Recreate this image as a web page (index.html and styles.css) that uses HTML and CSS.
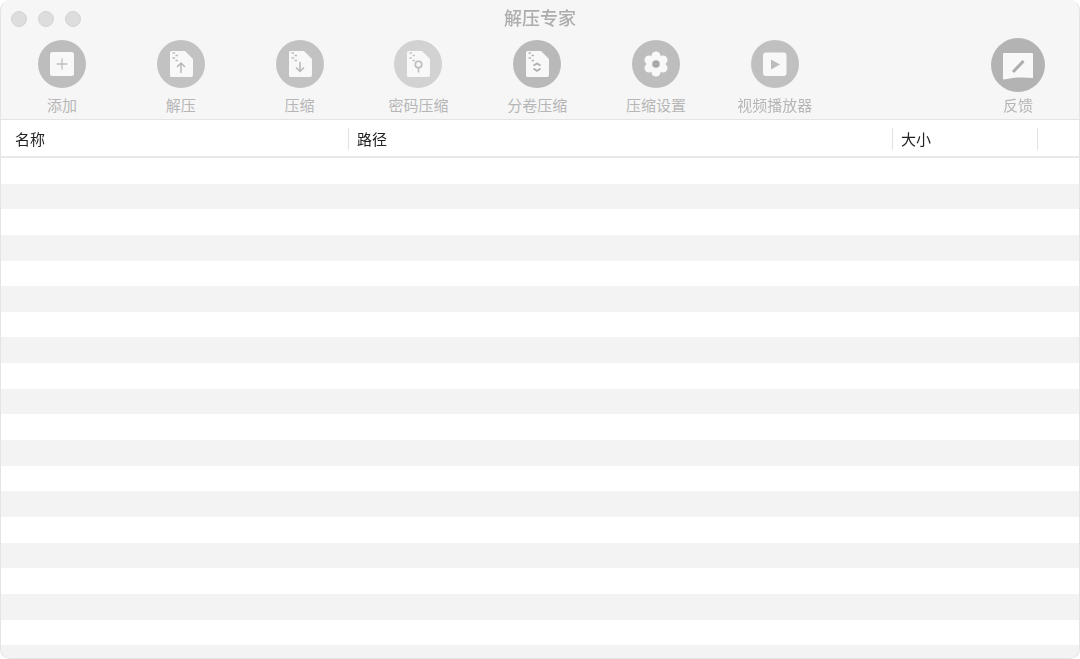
FILE: index.html
```html
<!DOCTYPE html>
<html lang="zh-CN">
<head>
    <meta charset="UTF-8">
    <meta name="viewport" content="width=device-width, initial-scale=1.0">
    <title>解压专家</title>
    <link rel="stylesheet" href="styles.css">
</head>
<body>
    <div class="window">
        <header class="titlebar">
            <div class="lights">
                <span class="light"></span>
                <span class="light"></span>
                <span class="light"></span>
            </div>
            <h1>解压专家</h1>
        </header>

        <nav class="toolbar">
            <div class="tool">
                <div class="tool-icon">
                    <svg class="circle" viewBox="0 0 48 48">
                        <circle cx="24" cy="24" r="24" fill="#bdbdbd"/>
                        <rect x="12" y="12" width="24" height="24" rx="2.5" fill="#f8f8f8"/>
                        <path d="M24 18.500v11M18.500 24h11" stroke="#c0c0c0" stroke-width="1.400" fill="none"/>
                    </svg>
                </div>
                <span>添加</span>
            </div>
            <div class="tool">
                <div class="tool-icon">
                    <svg class="circle" viewBox="0 0 48 48">
                        <circle cx="24" cy="24" r="24" fill="#c2c2c2"/>
                        <path d="M14.500 11H28l8 8v16a2 2 0 0 1-2 2H14.500a1.500 1.500 0 0 1-1.500-1.500v-23a1.500 1.500 0 0 1 1.500-1.500z" fill="#f8f8f8"/>
                        <path d="M15.500 13h2.500M18.500 15.500h2.500M15.500 18h2.500M18.500 20.500h2.500" stroke="#bcbcbc" stroke-width="1.600" fill="none"/>
                        <path d="M24 33V23.500M20 27l4-4 4 4" stroke="#b8b8b8" stroke-width="1.500" fill="none"/>
                    </svg>
                </div>
                <span>解压</span>
            </div>
            <div class="tool">
                <div class="tool-icon">
                    <svg class="circle" viewBox="0 0 48 48">
                        <circle cx="24" cy="24" r="24" fill="#c2c2c2"/>
                        <path d="M14.500 11H28l8 8v16a2 2 0 0 1-2 2H14.500a1.500 1.500 0 0 1-1.500-1.500v-23a1.500 1.500 0 0 1 1.500-1.500z" fill="#f8f8f8"/>
                        <path d="M15.500 13h2.500M18.500 15.500h2.500M15.500 18h2.500M18.500 20.500h2.500" stroke="#bcbcbc" stroke-width="1.600" fill="none"/>
                        <path d="M24 22v9.500M20 27.500l4 4 4-4" stroke="#b8b8b8" stroke-width="1.500" fill="none"/>
                    </svg>
                </div>
                <span>压缩</span>
            </div>
            <div class="tool">
                <div class="tool-icon">
                    <svg class="circle" viewBox="0 0 48 48">
                        <circle cx="24" cy="24" r="24" fill="#d2d2d2"/>
                        <path d="M14.500 11H28l8 8v16a2 2 0 0 1-2 2H14.500a1.500 1.500 0 0 1-1.500-1.500v-23a1.500 1.500 0 0 1 1.500-1.500z" fill="#f8f8f8"/>
                        <path d="M15.500 13h2.500M18.500 15.500h2.500M15.500 18h2.500M18.500 20.500h2.500" stroke="#c4c4c4" stroke-width="1.600" fill="none"/>
                        <circle cx="24.500" cy="24.500" r="3.200" stroke="#bcbcbc" stroke-width="1.600" fill="none"/>
                        <path d="M24.500 27.500v5" stroke="#bcbcbc" stroke-width="1.600"/>
                    </svg>
                </div>
                <span>密码压缩</span>
            </div>
            <div class="tool">
                <div class="tool-icon">
                    <svg class="circle" viewBox="0 0 48 48">
                        <circle cx="24" cy="24" r="24" fill="#b9b9b9"/>
                        <path d="M14.500 11H28l8 8v16a2 2 0 0 1-2 2H14.500a1.500 1.500 0 0 1-1.500-1.500v-23a1.500 1.500 0 0 1 1.500-1.500z" fill="#f8f8f8"/>
                        <path d="M15.500 13h2.500M18.500 15.500h2.500M15.500 18h2.500M18.500 20.500h2.500" stroke="#b4b4b4" stroke-width="1.600" fill="none"/>
                        <path d="M20.500 25.500l3.500-2 3.500 2M20.500 28.500l3.500 2.500 3.500-2.500" stroke="#aeaeae" stroke-width="1.800" fill="none"/>
                    </svg>
                </div>
                <span>分卷压缩</span>
            </div>
            <div class="tool">
                <div class="tool-icon">
                    <svg class="circle" viewBox="0 0 48 48">
                        <circle cx="24" cy="24" r="24" fill="#bdbdbd"/>
                        <g fill="#f8f8f8">
                            <circle cx="24" cy="24" r="8.500"/>
                            <circle cx="24" cy="16" r="4.500"/>
                            <circle cx="24" cy="32" r="4.500"/>
                            <circle cx="17" cy="20" r="4.500"/>
                            <circle cx="31" cy="20" r="4.500"/>
                            <circle cx="17" cy="28" r="4.500"/>
                            <circle cx="31" cy="28" r="4.500"/>
                        </g>
                        <circle cx="24" cy="24" r="3.800" fill="#a8a8a8"/>
                    </svg>
                </div>
                <span>压缩设置</span>
            </div>
            <div class="tool">
                <div class="tool-icon">
                    <svg class="circle" viewBox="0 0 48 48">
                        <circle cx="24" cy="24" r="24" fill="#c0c0c0"/>
                        <rect x="12" y="12.500" width="23.500" height="23.500" rx="3" fill="#f8f8f8"/>
                        <path d="M20 19.500l9 5-9 5z" fill="#bcbcbc"/>
                    </svg>
                </div>
                <span>视频播放器</span>
            </div>
            <div class="tool tool-feedback">
                <div class="tool-icon">
                    <svg class="circle-large" viewBox="0 0 54 54">
                        <circle cx="27" cy="27" r="27" fill="#b3b3b3"/>
                        <path d="M13 15h28a1 1 0 0 1 1 1v24c-9-1-20-1-29 1.500a1 1 0 0 1-1-1V16a1 1 0 0 1 1-1z" fill="#f8f8f8"/>
                        <path d="M22 34l10.500-11" stroke="#acacac" stroke-width="3" fill="none"/>
                    </svg>
                </div>
                <span>反馈</span>
            </div>
        </nav>

        <div class="file-table">
            <div class="table-head">
                <div class="col col-name">名称</div>
                <div class="col">路径</div>
                <div class="col">大小</div>
                <div class="col"></div>
            </div>
            <div class="table-body">
                <div class="row"></div><div class="row"></div><div class="row"></div><div class="row"></div>
                <div class="row"></div><div class="row"></div><div class="row"></div><div class="row"></div>
                <div class="row"></div><div class="row"></div><div class="row"></div><div class="row"></div>
                <div class="row"></div><div class="row"></div><div class="row"></div><div class="row"></div>
                <div class="row"></div><div class="row"></div><div class="row"></div><div class="row"></div>
            </div>
        </div>
    </div>
</body>
</html>
```

FILE: styles.css
```css
:root {
    --chrome: #f6f6f6;
    --line: #e4e4e4;
    --label: #b6b6b6;
    --stripe: #f3f3f3;
}

* {
    margin: 0;
    padding: 0;
    box-sizing: border-box;
}

html, body {
    height: 100%;
    overflow: hidden;
    background-color: #ffffff;
}

body {
    font-family: "Noto Sans CJK SC", "Liberation Sans", sans-serif;
}

/* the reference is a soft, resampled capture */
.window {
    height: 659px;
    display: flex;
    flex-direction: column;
    overflow: hidden;
    border: 1px solid var(--line);
    border-top: none;
    border-radius: 10px;
    background-color: var(--chrome);
    filter: blur(0.4px);
}

.titlebar {
    height: 38px;
    padding-bottom: 4px;
    display: flex;
    align-items: center;
    justify-content: center;
    position: relative;
}

.titlebar h1 {
    font-size: 18px;
    font-weight: 500;
    line-height: 1;
    color: #adadad;
}

.lights {
    position: absolute;
    left: 10px;
    top: 11px;
    display: flex;
    gap: 11px;
}

.light {
    width: 16px;
    height: 16px;
    border-radius: 50%;
    background-color: #dddddd;
    border: 1px solid #d2d2d2;
}

.toolbar {
    height: 82px;
    display: flex;
    padding: 0 1.6px;
    border-bottom: 1px solid var(--line);
}

.tool {
    width: 118.8px;
    display: flex;
    flex-direction: column;
    align-items: center;
    font-size: 15px;
    line-height: 20px;
    color: var(--label);
}

.tool-feedback {
    margin-left: auto;
}

.tool-icon {
    height: 56.5px;
    padding-top: 1.5px;
}

.tool-feedback .tool-icon {
    padding-top: 0;
}

.circle {
    display: block;
    width: 48px;
    height: 48px;
}

.circle-large {
    display: block;
    width: 54px;
    height: 54px;
}

.file-table {
    flex: 1;
    min-height: 0;
    background-color: #ffffff;
}

.table-head {
    height: 38px;
    padding-top: 1px;
    display: grid;
    grid-template-columns: 347px 544px 145px 1fr;
    align-items: center;
    border-bottom: 2px solid #e8e8e8;
    font-size: 15px;
    color: #222222;
}

.col {
    height: 22px;
    line-height: 22px;
    padding-left: 8px;
    border-left: 1px solid #e2e2e2;
}

.col-name {
    padding-left: 14px;
    border-left: none;
}

.row {
    height: 25.65px;
}

.row:nth-child(even) {
    background-color: var(--stripe);
}
```
